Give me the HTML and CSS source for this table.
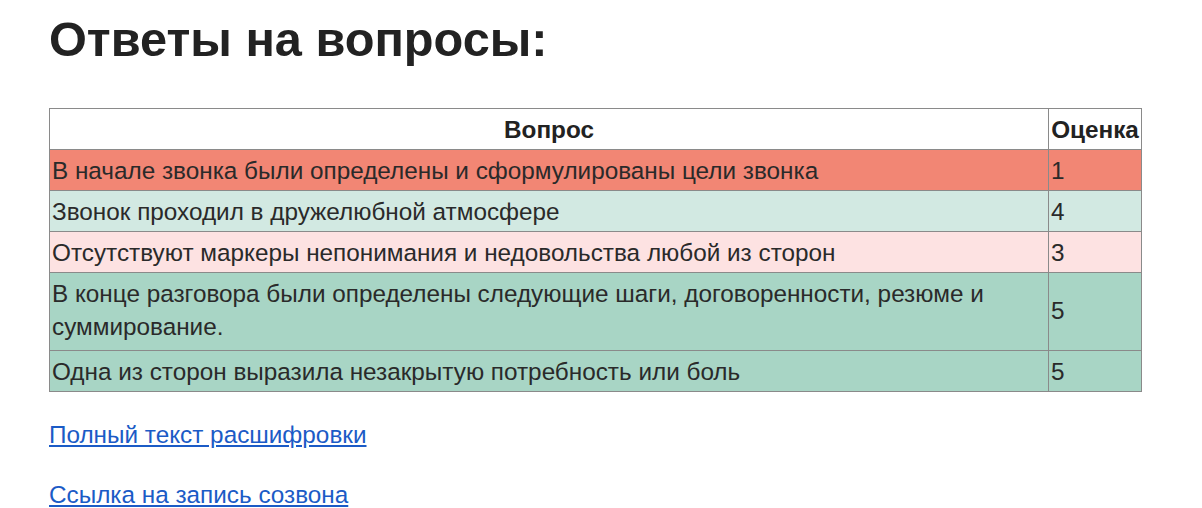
FILE: index.html
```html
<!DOCTYPE html>
<html lang="ru">
<head>
<meta charset="utf-8">
<link rel="stylesheet" href="styles.css">
</head>
<body>
<main class="page">
  <h1 class="title">Ответы на вопросы:</h1>
  <table class="answers">
    <thead>
      <tr>
        <th class="col-q">Вопрос</th>
        <th class="col-s">Оценка</th>
      </tr>
    </thead>
    <tbody>
      <tr class="bad">
        <td>В начале звонка были определены и сформулированы цели звонка</td>
        <td>1</td>
      </tr>
      <tr class="good-light">
        <td>Звонок проходил в дружелюбной атмосфере</td>
        <td>4</td>
      </tr>
      <tr class="bad-light">
        <td>Отсутствуют маркеры непонимания и недовольства любой из сторон</td>
        <td>3</td>
      </tr>
      <tr class="good tall">
        <td>В конце разговора были определены следующие шаги, договоренности, резюме и суммирование.</td>
        <td>5</td>
      </tr>
      <tr class="good">
        <td>Одна из сторон выразила незакрытую потребность или боль</td>
        <td>5</td>
      </tr>
    </tbody>
  </table>
  <p class="link-line"><a href="#" class="link">Полный текст расшифровки</a></p>
  <p class="link-line"><a href="#" class="link">Ссылка на запись созвона</a></p>
</main>
</body>
</html>
```

FILE: styles.css
```css
html, body {
  margin: 0;
  padding: 0;
  background: #fff;
}

body {
  font-family: "Liberation Sans", Arial, sans-serif;
  color: #222;
}

.page {
  padding: 0 49px;
}

.title {
  font-size: 48.7px;
  font-weight: bold;
  line-height: 56px;
  margin: 11px 0 41px;
  color: #222;
}

.answers {
  width: 1093px;
  border-collapse: collapse;
  font-size: 24.3px;
  line-height: 33px;
}

.answers th,
.answers td {
  border: 1px solid #8a8a8a;
  padding: 4px 2px 3px 2px;
  vertical-align: middle;
}

.answers .tall td {
  padding-bottom: 7px;
}

.answers th {
  font-weight: bold;
  background: #fff;
  color: #222;
}

.answers td {
  text-align: left;
  color: #2a2a2a;
}

.col-s {
  width: 88px;
}

.bad { background: #f28674; }
.good-light { background: #d2e9e2; }
.bad-light { background: #fde2e2; }
.good { background: #a8d5c5; }

.link-line {
  margin: 27px 0 0;
  font-size: 24.3px;
  line-height: 32px;
}

.link-line + .link-line {
  margin-top: 28px;
}

.link {
  color: #1b5bc6;
  text-decoration: underline;
}
```
